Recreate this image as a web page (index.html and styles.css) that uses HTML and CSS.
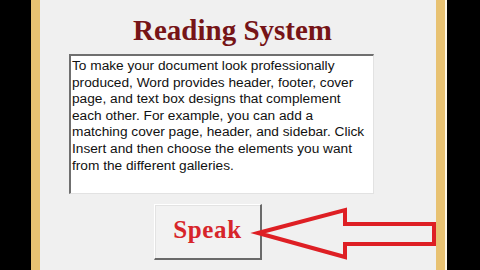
FILE: index.html
```html
<!DOCTYPE html>
<html lang="en">
<head>
  <meta charset="UTF-8" />
  <title>Reading System</title>
  <link rel="stylesheet" href="styles.css">
</head>
<body>
<div class="window">
  <h1 class="title">Reading System</h1>

  <div class="textbox">To make your document look professionally produced, Word provides header, footer, cover page, and text box designs that complement each other. For example, you can add a matching cover page, header, and sidebar. Click Insert and then choose the elements you want from the different galleries.</div>

  <button class="speak">Speak</button>

  <!-- red arrow pointing at the button -->
  <svg class="arrow" width="226" height="58" viewBox="0 0 226 58">
    <polygon points="46,29 133,6 133,20 222,20 222,40 133,40 133,53"
             fill="none" stroke="#de1f24" stroke-width="4" stroke-linejoin="miter"/>
  </svg>
</div>
</body>
</html>
```

FILE: styles.css
```css
html, body {
  margin: 0;
  height: 100%;
  overflow: hidden;
}
body {
  background: #000;
  display: flex;
}
.window {
  position: relative;
  margin-left: 31px;
  width: 414px;
  height: 270px;
  box-sizing: border-box;
  background: #f0f0f0;
  border-left: 9px solid #e8c272;
  border-right: 9px solid #e8c272;
  box-shadow: 2px 0 0 #fdf6e6;
  padding-top: 16px;
  display: flex;
  flex-direction: column;
  align-items: flex-start;
}
.title {
  margin: 0 0 9px 93px;
  font-family: "Liberation Serif", serif;
  font-weight: bold;
  font-size: 29px;
  line-height: 29px;
  color: #761417;
}
.textbox {
  margin-left: 29px;
  width: 305px;
  height: 140px;
  box-sizing: border-box;
  background: #fff;
  border-style: solid;
  border-width: 2px 1px 1px 2px;
  border-color: #6f6f6f #e2e2e2 #e2e2e2 #6f6f6f;
  padding: 2px 2px 0 1px;
  font-family: "Liberation Sans", Arial, sans-serif;
  font-size: 13.7px;
  line-height: 16.6px;
  color: #111;
}
.speak {
  margin: 10px 0 0 114px;
  width: 108px;
  height: 56px;
  background: #f2f2f2;
  border-style: solid;
  border-width: 1px 2px 2px 1px;
  border-color: #ffffff #6a6a6a #6a6a6a #ffffff;
  box-shadow: inset 1px 1px 0 #e3e3e3;
  font-family: "Liberation Serif", serif;
  font-weight: bold;
  font-size: 25px;
  letter-spacing: 0.6px;
  color: #d7252a;
  padding: 0 0 4px 0;
}
.arrow {
  position: absolute;
  left: 172px;
  top: 204px;
}
```
